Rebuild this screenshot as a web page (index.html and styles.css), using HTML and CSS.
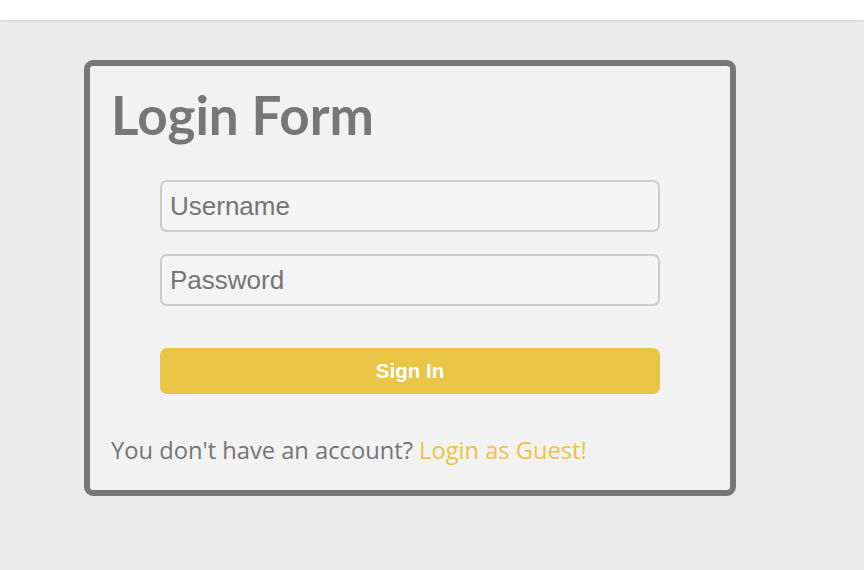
FILE: index.html
```html
<!DOCTYPE html>
<html lang="en">
<head>
<meta charset="utf-8">
<title>Login Form</title>
<link rel="stylesheet" href="styles.css">
</head>
<body>
<header class="topbar"></header>
<main class="page">
  <section class="card">
    <h1 class="title">Login Form</h1>
    <form class="form">
      <input class="field" type="text" placeholder="Username">
      <input class="field" type="password" placeholder="Password">
      <button class="btn" type="button">Sign In</button>
    </form>
    <p class="footer">You don't have an account? <a class="guest" href="#">Login as Guest!</a></p>
  </section>
</main>
</body>
</html>
```
FILE: styles.css
```css
html, body {
  margin: 0;
  padding: 0;
}
body {
  background: #ebebeb;
  font-family: "Open Sans", "Noto Sans CJK KR", sans-serif;
  height: 570px;
  overflow: hidden;
}
.topbar {
  height: 20px;
  background: #ffffff;
  box-shadow: 0 1px 2px rgba(0,0,0,0.12);
}
.page {
  padding: 40px 0 0 84px;
}
.card {
  box-sizing: border-box;
  width: 652px;
  height: 436px;
  border: 6px solid #777777;
  border-radius: 9px;
  background: #f2f2f2;
  padding: 19px 21px 0 21px;
}
.title {
  margin: 0;
  font-family: "Lato", "Open Sans", sans-serif;
  font-size: 53px;
  line-height: 60px;
  font-weight: 700;
  color: #777777;
}
.form {
  display: flex;
  flex-direction: column;
  align-items: flex-start;
  padding-left: 49px;
  margin-top: 35px;
}
.field {
  box-sizing: border-box;
  width: 500px;
  height: 52px;
  border: 2px solid #cccccc;
  border-radius: 7px;
  background: #f4f4f4;
  padding: 0 8px;
  font-family: "Liberation Sans", Arial, sans-serif;
  font-size: 26px;
  color: #555555;
  margin: 0 0 22px 0;
  outline: none;
}
.field::placeholder {
  color: #757575;
  opacity: 1;
}
.btn {
  box-sizing: border-box;
  width: 500px;
  height: 46px;
  margin-top: 20px;
  border: none;
  border-radius: 7px;
  background: #ebc545;
  color: #ffffff;
  font-family: "Liberation Sans", Arial, sans-serif;
  font-weight: 700;
  font-size: 20.5px;
  cursor: pointer;
}
.footer {
  margin: 41px 0 0 0;
  font-size: 23.7px;
  line-height: 30px;
  color: #757575;
}
.guest {
  color: #eec43f;
  text-decoration: none;
}
```
